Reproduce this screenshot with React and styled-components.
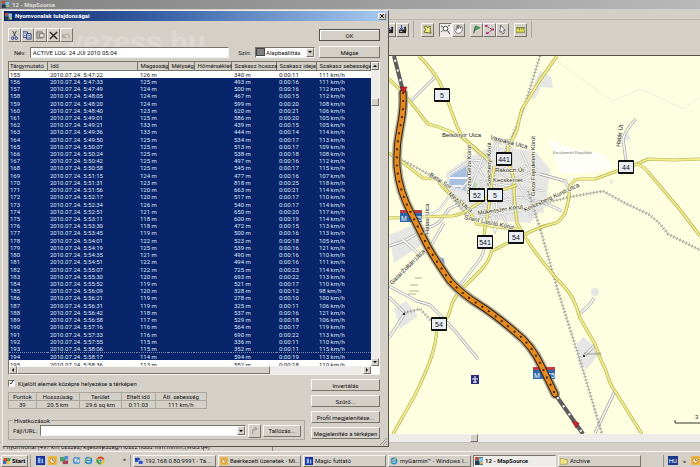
import React from "react";
import styled, { createGlobalStyle, css } from "styled-components";

const face = "#d4d0c8";
const navy = "#08246b";

const GlobalStyle = createGlobalStyle`
  * { box-sizing: border-box; }
  body { margin: 0; background: ${face}; overflow: hidden; }
  body, button, input, select, table {
    font-family: Roboto, "Liberation Sans", Arial, sans-serif;
    font-size: 6px;
    line-height: 7px;
    color: #111;
  }
`;

const raised = css`
  border: 1px solid;
  border-color: #f8f7f4 #77746c #77746c #f8f7f4;
`;
const sunken = css`
  border: 1px solid;
  border-color: #77746c #f4f2ee #f4f2ee #77746c;
`;

const Desktop = styled.div`
  position: relative;
  display: flex;
  flex-direction: column;
  height: 100vh;
  background: ${face};
`;
const MainTitle = styled.header`
  display: flex;
  align-items: center;
  gap: 3px;
  height: 9px;
  flex: none;
  padding-left: 2px;
  background: linear-gradient(90deg, #828282, #9b9b9b 50%, #b9b9b9);
  color: #dedcd6;
  font-weight: bold;
`;
const MenuStrip = styled.div`
  height: 11px;
  flex: none;
  border-bottom: 1px solid #bab6ae;
`;
const ToolStrip = styled.div`
  display: flex;
  flex: none;
  height: 35px;
  padding: 1px 0 17px calc(55vw - 2px);
`;
const ToolGroup = styled.div`
  display: flex;
  align-items: center;
  gap: ${(p) => p.$gap || 0}px;
  padding: 0 4px 0 ${(p) => p.$start || 0}px;
  border-right: 1px solid #aaa69e;
`;
const IconButton = styled.button`
  ${(p) => (p.$pressed ? sunken : raised)}
  display: grid;
  place-items: center;
  width: 13px;
  height: 14px;
  padding: 0;
  background: ${(p) => (p.$pressed ? "#eeece8" : face)};
  margin-left: ${(p) => (p.$apart ? 5 : 0)}px;
  svg { width: 9px; height: 9px; }
`;
const Workspace = styled.main`
  display: grid;
  grid-template-columns: calc(55vw + 4px) 1fr;
  flex: 1;
  min-height: 0;
`;
const SidePane = styled.div`
  border-right: 1px solid #77746c;
`;
const MapPane = styled.section`
  display: flex;
  flex-direction: column;
  min-width: 0;
  border-top: 1px solid #55524c;
`;
const MapArt = styled.svg`
  flex: 1;
  min-height: 0;
  width: 100%;
  background: #fefee1;
`;
const MapScroll = styled.div`
  height: 9px;
  flex: none;
  padding-left: 26%;
  background: #eeece8;
`;
const Thumb = styled.div`
  ${raised}
  width: ${(p) => p.$w || "8px"};
  height: 8px;
  background: ${face};
`;
const StatusBar = styled.footer`
  display: flex;
  flex: none;
  height: 9px;
  overflow: hidden;
  border-top: 1px solid #c4c0b8;
  white-space: nowrap;
`;
const StatusCell = styled.span`
  width: ${(p) => p.$w}px;
  padding: 1px 2px;
  border-right: 1px solid #8a877f;
  line-height: 6px;
`;

/* Taskbar */
const Taskbar = styled.nav`
  display: flex;
  align-items: center;
  gap: 2px;
  height: 16px;
  flex: none;
  padding: 2px 0 0 1px;
  border-top: 1px solid #f6f4f0;
`;
const StartButton = styled.button`
  ${raised}
  display: flex;
  align-items: center;
  gap: 1px;
  width: 27px;
  height: 12px;
  padding: 0 1px;
  background: ${face};
  font-weight: bold;
  color: #000;
`;
const QuickLaunch = styled.div`
  display: flex;
  align-items: center;
  gap: 3px;
  width: 101px;
  height: 12px;
  padding-left: 5px;
  border-left: 1px solid #9a968e;
  border-right: 1px solid #9a968e;
  svg { width: 9px; height: 9px; }
`;
const More = styled.span`
  margin-left: auto;
  padding-right: 4px;
  align-self: flex-start;
  font-weight: bold;
`;
const Tasks = styled.div`
  display: flex;
  flex: 1;
  gap: 2px;
  min-width: 0;
`;
const TaskButton = styled.button`
  ${(p) => (p.$active ? sunken : raised)}
  display: flex;
  align-items: center;
  gap: 2px;
  flex: 0 1 83px;
  min-width: 0;
  height: 12px;
  padding: 0 1px;
  background: ${(p) => (p.$active ? "#efede9" : face)};
  font-weight: ${(p) => (p.$active ? "bold" : "normal")};
  white-space: nowrap;
  svg { width: 8px; height: 8px; flex: none; }
`;
const Tray = styled.div`
  display: flex;
  align-items: center;
  gap: 5px;
  height: 12px;
  padding-left: 4px;
  border-left: 1px solid #9a968e;
`;
const Lang = styled.span`
  padding: 1px;
  background: #1c3a8c;
  color: #fff;
`;

/* Track dialog */
const Dialog = styled.section`
  position: absolute;
  left: 2px;
  top: 10px;
  width: calc(55vw + 2px);
  ${raised}
  border-color: #f0eee8 #55524c #55524c #f0eee8;
  background: ${face};
`;
const Watermark = styled.div`
  position: absolute;
  left: 64px;
  top: 17px;
  font-family: "Liberation Sans", Arial, sans-serif;
  font-size: 29px;
  line-height: 29px;
  font-weight: bold;
  color: #dcd8d1;
  pointer-events: none;
`;
const DialogTitle = styled.header`
  display: flex;
  align-items: center;
  justify-content: space-between;
  height: 10px;
  margin: 0 1px;
  padding: 0 1px;
  background: linear-gradient(90deg, #0a246a, #3f68ab 45%, #a6caf0);
`;
const TitleText = styled.h1`
  display: flex;
  align-items: center;
  gap: 3px;
  margin: 0;
  font-size: 6px;
  line-height: 8px;
  color: #fff;
`;
const Close = styled.button`
  ${raised}
  display: grid;
  place-items: center;
  width: 8px;
  height: 7px;
  padding: 0;
  background: ${face};
`;
const Body = styled.div`
  position: relative;
  display: flex;
  flex-direction: column;
  padding: 7px 8px 6px 5px;
`;
const Top = styled.div`
  display: grid;
  grid-template-columns: 1fr 61px;
  gap: 4px;
  align-items: center;
`;
const Icons = styled.div`
  display: flex;
`;
const Fields = styled.div`
  display: flex;
  align-items: center;
  height: 12px;
`;
const Label = styled.label`
  padding: 0 ${(p) => p.$after || 3}px 0 ${(p) => p.$before || 0}px;
  white-space: nowrap;
`;
const TextBox = styled.input`
  ${sunken}
  flex: 1;
  min-width: 0;
  height: 11px;
  padding: 0 2px;
  background: #fff;
`;
const Combo = styled.div`
  ${sunken}
  display: flex;
  align-items: center;
  flex: ${(p) => (p.$w ? `0 0 ${p.$w}px` : "1")};
  height: 11px;
  background: #fff;
`;
const Swatch = styled.span`
  width: 9px;
  height: 8px;
  border: 1px solid #444;
  background: #808080;
`;
const Select = styled.select`
  appearance: none;
  flex: 1;
  min-width: 0;
  height: 9px;
  padding: 0 1px;
  border: 0;
  background: transparent;
`;
const DropMark = styled.span`
  ${raised}
  display: grid;
  place-items: center;
  width: 8px;
  height: 9px;
  background: ${face};
`;
const Push = styled.button`
  ${raised}
  ${(p) => p.$main && "border-color: #55524c; box-shadow: inset 1px 1px #fff;"}
  width: ${(p) => (p.$w ? `${p.$w}px` : "100%")};
  height: ${(p) => p.$h || 12}px;
  padding: 0;
  background: ${face};
  white-space: nowrap;
`;
const ListFrame = styled.div`
  ${sunken}
  display: grid;
  grid-template-columns: 1fr 8px;
  grid-template-rows: 304px 8px;
  margin-top: 3px;
  background: #fff;
`;
const Clip = styled.div`
  overflow: hidden;
`;
const TrackTable = styled.table`
  width: 100%;
  height: 306px;
  border-collapse: collapse;
  table-layout: fixed;
  th, td {
    padding: 0 0 0 3px;
    text-align: left;
    font-weight: normal;
    white-space: nowrap;
    line-height: 7px;
  }
  th {
    height: 8px;
    border-right: 1px solid #77746c;
    border-bottom: 1px solid #77746c;
    background: ${face};
  }
  td:first-child, th:first-child { padding-left: 1px; }
`;
const TrackRow = styled.tr`
  background: ${(p) => (p.$selected ? navy : "#fff")};
  color: ${(p) => (p.$selected ? "#dfe6f5" : "#222")};
  td { color: inherit; border-top: ${(p) => (p.$focus ? "1px dotted #7d89ac" : "0")}; }
`;
const VScroll = styled.div`
  display: flex;
  flex-direction: column;
  background: #eeece8;
`;
const HScroll = styled.div`
  display: flex;
  background: #eeece8;
`;
const Arrow = styled.button`
  ${raised}
  display: grid;
  place-items: center;
  width: 8px;
  height: 8px;
  padding: 0;
  background: ${face};
`;
const Spacer = styled.div`
  flex: ${(p) => (p.$h ? `0 0 ${p.$h}px` : "1")};
`;
const Bottom = styled.div`
  display: grid;
  grid-template-columns: 1fr 69px;
  gap: 6px;
  margin-top: 4px;
`;
const Actions = styled.div`
  display: flex;
  flex-direction: column;
  gap: 4px;
`;
const CheckLine = styled.label`
  display: flex;
  align-items: center;
  gap: 3px;
  height: 8px;
`;
const Check = styled.input`
  ${sunken}
  appearance: none;
  width: 7px;
  height: 7px;
  margin: 0;
  background: #fff;
  &:checked::after {
    content: "✓";
    display: block;
    font: bold 7px/5px "DejaVu Sans", sans-serif;
    color: #000;
  }
`;
const Stats = styled.table`
  width: 67%;
  margin-top: 5px;
  border-collapse: collapse;
  th, td {
    height: 8px;
    padding: 0;
    border: 1px solid #aaa69e;
    font-weight: normal;
    text-align: center;
    line-height: 7px;
  }
`;
const Links = styled.fieldset`
  display: flex;
  align-items: center;
  gap: 2px;
  margin: 8px 0 0;
  padding: 0 3px 2px 4px;
  min-width: 0;
  height: 23px;
  border: 1px solid #aaa69e;
  legend { padding: 0 1px; }
`;
const Grip = styled.svg`
  position: absolute;
  right: 1px;
  bottom: 1px;
  width: 7px;
  height: 7px;
`;

const RAW = `155 47:22 126 340 11 111|156 47:33 125 493 16 111|157 47:49 124 500 16 112|158 48:05 124 467 15 112|159 48:20 124 599 20 108|160 48:40 123 620 21 106|161 49:01 125 586 20 105|162 49:21 133 439 15 105|163 49:36 133 444 14 114|164 49:50 125 534 17 113|165 50:07 125 513 17 109|166 50:24 125 538 18 108|167 50:42 125 497 16 112|168 50:58 125 545 17 115|169 51:15 124 477 16 107|170 51:31 123 818 25 118|171 51:56 120 663 21 114|172 52:17 120 517 17 110|173 52:34 126 540 17 114|174 52:51 121 650 20 117|175 53:11 118 600 19 114|176 53:30 118 472 15 113|177 53:45 119 500 16 113|178 54:01 122 523 18 105|179 54:19 125 539 16 121|180 54:35 121 490 16 110|181 54:51 122 494 16 111|182 55:07 122 725 23 114|183 55:30 120 693 22 113|184 55:52 119 521 17 110|185 56:09 120 328 12 98|186 56:21 119 278 10 100|187 56:31 119 325 11 106|188 56:42 118 537 16 121|189 56:58 117 529 18 106|190 57:16 116 564 17 119|191 57:33 116 690 22 113|192 57:55 115 336 11 110|193 58:06 115 352 11 115|194 58:17 114 594 19 113|195 58:36 113 552 18 110`;
const rows = RAW.split("|").map((r) => r.split(" "));
const columns = [
  ["Tárgymutató", 38], ["Idő", 90], ["Magasság", 31], ["Mélység", 26],
  ["Hőmérséklet", 37], ["Szakasz hossza", 45], ["Szakasz ideje", 40], ["Szakasz sebessége"],
];

const Tri = ({ d }) => {
  const paths = { up: "M0 3L2 1L4 3Z", down: "M0 1L2 3L4 1Z", left: "M3 0L1 2L3 4Z", right: "M1 0L3 2L1 4Z" };
  return <svg width="4" height="4" aria-hidden="true"><path d={paths[d]} fill="#000" /></svg>;
};
const AppIcon = () => (
  <svg width="7" height="7" viewBox="0 0 8 8" aria-hidden="true">
    <rect width="8" height="8" fill="#4a7c86" /><rect width="4" height="3" fill="#c44a34" />
    <rect x="4" y="1" width="4" height="4" fill="#7fc0e0" /><rect y="4" width="4" height="4" fill="#243c50" />
    <rect x="5" y="5" width="3" height="2" fill="#e0b060" />
  </svg>
);
const glyphs = {
  cut: <><path d="M3 0L6 6M7 0L4 6" stroke="#333" fill="none" /><circle cx="3" cy="8" r="1.4" stroke="#22339a" fill="none" /><circle cx="7" cy="8" r="1.4" stroke="#22339a" fill="none" /></>,
  copy: <><path d="M0 1H5V7H0Z" fill="#eef" stroke="#22306f" /><path d="M4 3H9V9H4Z" fill="#dfe3f4" stroke="#22306f" /><path d="M5 5H8M5 7H8M1 3H3M1 5H3" stroke="#22306f" strokeWidth=".7" /></>,
  paste: <><path d="M1 1H7V8H1Z" fill="#bbb7af" stroke="#77746c" /><path d="M4 3H9V7H4Z" fill="#e8e6e2" stroke="#77746c" /></>,
  del: <path d="M1 1L9 9M9 1L1 9" stroke="#222" strokeWidth="1.5" />,
  undo: <path d="M1 3V7H5M1 7C3 2 9 2 8 8" stroke="#9a968e" fill="none" />,
  device: <><path d="M1 5H9V9H1Z" fill="#222" /><path d="M8 2V6" stroke="#222" strokeWidth="2" /><path d="M4 0V4M2 3L4 5L6 3" stroke="#2234b4" fill="none" /><path d="M2 7H5" stroke="#ddd" /></>,
  area: <path d="M1 2L4 1L5 3L8 1V6L9 9L1 8L3 5Z" fill="#eeee86" stroke="#62621e" />,
  zoom: <><circle cx="5" cy="4" r="2.6" fill="#fff" stroke="#333" /><path d="M7 6L10 10M0 1L2 2M8 1L10 0M0 8L2 6" stroke="#333" /></>,
  hand: <path d="M3 9L0 5L1 4L3 6V1L4 1V4V0H5V4L6 1H7V4L8 2H9V6L7 9Z" fill="#fff" stroke="#555" strokeWidth=".7" />,
  flag: <><path d="M2 9L4 1" stroke="#222" /><path d="M4 1L9 3L3 6Z" fill="#49aa60" stroke="#156c2a" strokeWidth=".6" /></>,
  route: <><path d="M1 1L8 5L3 9" stroke="#444" fill="none" strokeDasharray="1.5 1" /><path d="M0 0H3V2H0ZM7 4H10V6H7ZM1 8H4V10H1Z" fill="#c02c8e" /></>,
  pointer: <path d="M3 0L8 6H6L7 9L5 10L4 7L2 8Z" fill="#fff" stroke="#444" strokeWidth=".8" />,
  ruler: <><path d="M0 3H10V8H0Z" fill="#eaea58" stroke="#77772a" /><path d="M2 3V5M4 3V6M6 3V5M8 3V6" stroke="#444" strokeWidth=".7" /></>,
  jump: <path d="M3 9V5Q3 3 6 3M5 1L8 3L5 5" fill="none" stroke="#8a877f" />,
  blue: <><rect width="10" height="10" fill="#1d2f9c" /><path d="M2 2H5V8H2ZM6 3H8V8H6Z" fill="#83b6ec" /></>,
  mail: <><rect width="10" height="10" rx="1" fill="#f0b642" /><circle cx="5" cy="5" r="3" fill="#fff3c4" stroke="#bd7820" /><path d="M5 3V5H7" stroke="#765" fill="none" /></>,
  disks: <><rect x="0" y="1" width="6" height="5" fill="#49a36b" /><rect x="3" y="5" width="6" height="4" fill="#a54458" /><path d="M5 0H9V4H5Z" fill="#568bd0" /></>,
  desk: <><rect x="1" y="1" width="8" height="8" rx="3" fill="#5594cc" /><path d="M3 3H8V7H3Z" fill="#eef6fb" /><path d="M4 7L8 2" stroke="#275a96" /></>,
  ie: <><circle cx="5" cy="5" r="3.4" fill="none" stroke="#1f8fd6" strokeWidth="1.7" /><path d="M2 5H8" stroke="#1f8fd6" strokeWidth="1.4" /><path d="M0 9Q0 4 9 1" stroke="#ecb72c" fill="none" /></>,
  chrome: <><circle cx="5" cy="5" r="4.5" fill="#e3bf34" /><path d="M1 3A4.5 4.5 0 0 1 9.4 4H5Z" fill="#d8412f" /><path d="M.7 3.4A4.5 4.5 0 0 0 5 9.5L6 6Z" fill="#3b9c48" /><circle cx="5" cy="5" r="1.9" fill="#4a86d8" stroke="#fff" strokeWidth=".6" /></>,
  pc: <><rect x="0" y="1" width="6" height="5" fill="#1d44b8" /><rect x="4" y="4" width="6" height="5" fill="#3158c8" stroke="#fff" strokeWidth=".6" /></>,
  folder: <path d="M0 2H4L5 3H9V9H0Z" fill="#f4e58c" stroke="#9a852c" strokeWidth=".8" />,
};
const Glyph = ({ name }) => <svg viewBox="0 0 10 10" width="9" height="9" aria-hidden="true">{glyphs[name]}</svg>;

const yellowRoads = [
  "M419 55Q434 70 440 82T451 109T462 136L492 162",
  "M389 78Q400 88 408 98T428 123Q445 127 463 137L492 162",
  "M389 152Q400 159 410 167T423 177L437 178Q445 190 456 197T477 223L498 226L518 228",
  "M557 55L540 79Q526 102 522 108Q519 118 518 125T508 145L507 158",
  "M507 160Q514 172 514 185T517 222Q526 238 533 248T557 278Q569 290 573 298T580 317L595 343Q600 358 606 370Q610 384 615 390L642 433",
  "M540 226L556 222Q562 218 565 212Q570 198 569 188Q572 178 580 178L595 178L617 170L637 163L648 158L673 159L700 158",
  "M635 163Q643 164 649 172L681 210L700 235",
  "M545 225Q530 230 518 237L492 250Q489 260 483 267L462 288Q452 298 450 310Q446 322 437 327Q436 343 430 360Q424 376 414 396L393 433",
  "M389 217L452 215Q460 214 468 209L496 191L517 184",
  "M484 236L485 226L488 212L494 165",
];
const whiteRoads = [
  "M434 77L411 100", "M636 118Q626 128 623 138L626 160", "M580 312Q590 305 594 297",
  "M584 355L596 343", "M389 245L404 240L425 228Q437 224 440 220L449 208L465 200",
  "M392 281L412 262L430 246L444 222", "M389 285L417 300L430 304L443 317L455 330L478 358",
  "M389 296L405 312L389 337", "M402 238L420 254", "M460 284Q475 265 480 258T485 236",
  "M540 173L565 180L570 188", "M540 200L562 210", "M615 390L595 432",
];
const streets = [
  "M450 173L470 160L490 159", "M459 190L486 160L496 140", "M464 204L493 174L530 164",
  "M470 145L507 177L536 180", "M464 154L481 172L515 205", "M492 138L511 147L514 215",
  "M494 166L540 173", "M478 180L530 188L545 190", "M465 208L520 196L545 202",
  "M484 203L495 230L500 209L510 229", "M498 138L496 220", "M521 150L535 180L530 218",
  "M455 187L440 208L430 214", "M474 161L485 178L476 197", "M503 160L527 197L543 211",
  "M480 216L529 208L540 200", "M484 153L470 190", "M510 180L538 168",
];
const rails = [
  "M540 55L523 110L505 152", "M540 203L575 195L603 190L625 202L650 214L660 223L668 233L700 249",
  "M528 190L540 227L558 290L583 369L602 433", "M389 153L410 163L437 178L468 216", "M404 312L420 308L437 326",
];
const track = "M403 92Q404 108 400 127T397 166Q399 190 412 214Q420 230 426 242T450 280Q462 293 478 303T515 331Q532 344 542 366L555 393";
const signs = [["5", 442, 94], ["441", 504, 158], ["52", 477, 194], ["5", 495, 194], ["541", 485, 241], ["54", 516, 236], ["44", 626, 166], ["54", 439, 323]];
const names = [
  ["Belsőnyír Utca", 442, 136, 0], ["Vaspálya Utca", 490, 138, 15], ["Rákóczi Út", 495, 171, 0], ["Kecskemét", 493, 181, 0],
  ["Dózsa Géza Körút", 471, 193, -90], ["Széchenyi Körút", 491, 185, -90], ["Géza Fejedelem Körút", 535, 195, -90],
  ["Batai Sor", 429, 175, 32], ["Mező Utca", 448, 194, 38], ["Műkertszer Körút", 478, 214, -8],
  ["Kerkesberg Kunó Utca", 525, 211, -25], ["Szent László Körút", 464, 218, 12], ["Garai Zoltán Utca", 392, 284, -45],
  ["Halasi Utca", 429, 233, -90], ["Határ Út", 620, 146, -82],
];

const AreaMap = () => (
  <MapArt viewBox="389 55 311 378" preserveAspectRatio="xMinYMin slice" role="img" aria-label="Térkép" fontFamily="Liberation Sans">
    <g fill="#e6e6e4">
      <path d="M540 70L551 76L553 87L541 86L535 98L528 96Z" /><path d="M468 157L492 145L535 150L550 168L546 205L530 222L470 217L450 198L446 172Z" />
      <path d="M389 234L418 222L430 238L394 262Z" /><path d="M394 308L406 300L418 315L400 328Z" />
      <path d="M577 343L583 336L595 345L598 354L587 368L579 364Z" /><circle cx="595" cy="291" r="4" />
      <path d="M626 131L631 137L627 140L623 137ZM609 178L614 180L611 184Z" /><path d="M430 68L438 77L433 81Z" />
    </g>
    <path d="M549 138Q575 150 592 151T612 167Q580 175 560 171Z" fill="#fffffa" />
    <path d="M450 175L470 163L466 190L449 185Z" fill="#a8c0e0" /><path d="M449 177H468M452 185H465" stroke="#f2f5fa" strokeWidth="2" />
    <path d="M470 175L478 184L468 196ZM482 156L490 149V159Z" fill="#bcd9b6" />
    <path d="M557 60L612 100L641 88L684 108L700 96" fill="none" stroke="#f1efdc" />
    <path d="M415 277H422M410 284H418M409 290H419M408 293H416" stroke="#b3b08c" />
    {streets.map((d) => <g key={d} fill="none"><path d={d} stroke="#b3b3b5" strokeWidth="2.2" /><path d={d} stroke="#fff" strokeWidth="1.2" /></g>)}
    {whiteRoads.map((d) => <g key={d} fill="none" strokeLinejoin="round"><path d={d} stroke="#a2a2a6" strokeWidth="3" /><path d={d} stroke="#f7f7f2" strokeWidth="1.7" /></g>)}
    {rails.map((d) => <g key={d} fill="none" stroke="#9b9b96"><path d={d} strokeWidth=".7" /><path d={d} strokeWidth="3.4" strokeDasharray=".8 2.6" /></g>)}
    {yellowRoads.map((d) => <g key={d} fill="none" strokeLinejoin="round"><path d={d} stroke="#b7b14c" strokeWidth="3.2" /><path d={d} stroke="#f1ed93" strokeWidth="1.8" /></g>)}
    <path d="M438 255L444 258L445 264L440 263Z" fill="#7c9cc8" />
    <g fill="none">
      <path d={track} stroke="#b3ad96" strokeWidth="10" strokeLinecap="round" />
      <path d="M394 55L403 90M555 393L583 433" stroke="#5d5d5f" strokeWidth="4" />
      <path d="M394 55L403 90M555 393L583 433" stroke="#fff" strokeWidth="2" strokeDasharray="2 8" strokeDashoffset="6" />
    </g>
    {[[411, 215], [544, 372]].map(([x, y]) => (
      <g key={x}><rect x={x - 11} y={y - 6} width="22" height="12" fill="#2d68ad" /><rect x={x - 11} y={y - 6} width="22" height="3" fill="#bc3e42" />
        <text x={x - 10} y={y + 5} fontSize="7" fill="#fff">M</text><text x={x + 3} y={y + 5} fontSize="7" fill="#fff">75</text></g>
    ))}
    <g fill="none" strokeLinecap="round"><path d={track} stroke="#2a2118" strokeWidth="7" /><path d={track} stroke="#e58a1e" strokeWidth="5" /><path d={track} stroke="#2e1b08" strokeWidth="2" strokeDasharray=".1 8" /></g>
    <path d="M400 86H407L404 92ZM572 420L579 422L576 427Z" fill="#d0212c" stroke="#7b1820" strokeWidth=".6" />
    <g fill="#222" stroke="#fefee8" strokeWidth="1" paintOrder="stroke">
      {names.map(([t, x, y, r]) => <text key={t} x={x} y={y} fontSize={6} transform={`rotate(${r} ${x} ${y})`}>{t}</text>)}
    </g>
    <text x="553" y="153" fontSize="4" fill="#77776f">Kecskeméti Repülőtér</text>
    <text x="584" y="354" fontSize="4" fill="#88887f">Városföld</text>
    {signs.map(([t, x, y]) => (
      <g key={`${t}${x}`}><rect x={x - 8} y={y - 7} width="16" height="14" rx="1" fill="#111" /><rect x={x - 7} y={y - 5} width="14" height="10" fill="#e9eef5" />
        <text x={x} y={y + 3} fontSize="7" textAnchor="middle" fill="#111">{t}</text></g>
    ))}
    <rect x="471" y="374" width="8" height="9" fill="#2b2b80" /><path d="M475 375V382M472 378H478M473 381H477" stroke="#fff" />
    <circle cx="404" cy="313" r="1" /><circle cx="584" cy="355" r="1" />
    <path d="M675 419V422H700" fill="none" stroke="#333" /><text x="695" y="418" fontSize="6" fill="#333">3</text>
  </MapArt>
);

export default function App() {
  return (
    <Desktop>
      <GlobalStyle />
      <MainTitle><AppIcon />12 - MapSource</MainTitle>
      <MenuStrip />
      <ToolStrip>
        <ToolGroup><IconButton aria-label="Vétel"><Glyph name="device" /></IconButton><IconButton aria-label="Küldés"><Glyph name="device" /></IconButton></ToolGroup>
        <ToolGroup $start={7}>
          <IconButton aria-label="Terület"><Glyph name="area" /></IconButton>
          <IconButton $pressed $apart aria-label="Nagyítás"><Glyph name="zoom" /></IconButton>
          <IconButton aria-label="Mozgatás"><Glyph name="hand" /></IconButton>
          <IconButton $apart aria-label="Útpont"><Glyph name="flag" /></IconButton>
          <IconButton aria-label="Útvonal"><Glyph name="route" /></IconButton>
          <IconButton aria-label="Kijelölés"><Glyph name="pointer" /></IconButton>
          <IconButton $apart aria-label="Mérés"><Glyph name="ruler" /></IconButton>
        </ToolGroup>
      </ToolStrip>
      <Workspace>
        <SidePane />
        <MapPane>
          <AreaMap />
          <MapScroll><Thumb /></MapScroll>
        </MapPane>
      </Workspace>
      <StatusBar>
        <StatusCell $w={103}>1 nyomvonal (497 km összes) kijelölve</StatusCell>
        <StatusCell $w={101}>Szeg/Hossz hddd°mm.mmm',(WGS 84)</StatusCell>
        <StatusCell $w={69} />
      </StatusBar>
      <Taskbar>
        <StartButton>
          <svg width="8" height="8" viewBox="0 0 8 8" aria-hidden="true"><path d="M1 1H4V4H0Z" fill="#d8412f" /><path d="M4 1H8L7 4H4Z" fill="#49a34e" /><path d="M0 4H4L3 7H0Z" fill="#3b6cd0" /><path d="M4 4H7L6 7H3Z" fill="#eec23a" /></svg>
          Start
        </StartButton>
        <QuickLaunch>
          {["blue", "mail", "disks", "desk", "ie", "chrome"].map((n) => <Glyph key={n} name={n} />)}
          <More>»</More>
        </QuickLaunch>
        <Tasks>
          <TaskButton><Glyph name="pc" />192.168.0.80:9991 - Tá...</TaskButton>
          <TaskButton><Glyph name="mail" />Beérkezett üzenetek - Mi...</TaskButton>
          <TaskButton><Glyph name="blue" />Magic futtató</TaskButton>
          <TaskButton><Glyph name="ie" />myGarmin™ - Windows I...</TaskButton>
          <TaskButton $active><AppIcon />12 - MapSource</TaskButton>
          <TaskButton><Glyph name="folder" />Archive</TaskButton>
        </Tasks>
        <Tray><Lang>HU</Lang><b>«</b><Glyph name="mail" /></Tray>
      </Taskbar>

      <Dialog aria-label="Nyomvonalak tulajdonságai">
        <DialogTitle>
          <TitleText><AppIcon />Nyomvonalak tulajdonságai</TitleText>
          <Close aria-label="Bezárás"><svg width="4" height="4" viewBox="0 0 4 4"><path d="M0 0L4 4M4 0L0 4" stroke="#000" /></svg></Close>
        </DialogTitle>
        <Watermark>vezess.hu</Watermark>
        <Body>
          <Top>
            <Icons>
              {[["cut", "Kivágás"], ["copy", "Másolás"], ["paste", "Beillesztés"], ["del", "Törlés"], ["undo", "Visszavonás"]].map(([n, l]) => (
                <IconButton key={n} aria-label={l}><Glyph name={n} /></IconButton>
              ))}
            </Icons>
            <Push $main>OK</Push>
            <Fields>
              <Label htmlFor="name" $before={6} $after={4}>Név:</Label>
              <TextBox id="name" defaultValue="ACTIVE LOG: 24 JÚl 2010 05:04" />
              <Label htmlFor="color" $before={9} $after={4}>Szín:</Label>
              <Combo $w={60}><Swatch /><Select id="color"><option>Alapbeállítás</option></Select><DropMark><Tri d="down" /></DropMark></Combo>
            </Fields>
            <Push>Mégse</Push>
          </Top>
          <ListFrame>
            <Clip>
              <TrackTable>
                <colgroup>{columns.map(([t, w]) => <col key={t} width={w} />)}</colgroup>
                <thead><tr>{columns.map(([t]) => <th key={t}>{t}</th>)}</tr></thead>
                <tbody>
                  {rows.map(([n, time, alt, len, dur, speed]) => (
                    <TrackRow key={n} $selected={n !== "155" && n !== "195"} $focus={n === "194"}>
                      <td>{n}</td><td>2010.07.24. 5:{time}</td><td>{alt} m</td><td /><td />
                      <td>{len} m</td><td>0:00:{dur}</td><td>{speed} km/h</td>
                    </TrackRow>
                  ))}
                </tbody>
              </TrackTable>
            </Clip>
            <VScroll>
              <Arrow aria-label="Fel"><Tri d="up" /></Arrow><Spacer $h={28} /><Thumb /><Spacer /><Arrow aria-label="Le"><Tri d="down" /></Arrow>
            </VScroll>
            <HScroll>
              <Arrow aria-label="Balra"><Tri d="left" /></Arrow><Thumb $w="70%" /><Spacer /><Arrow aria-label="Jobbra"><Tri d="right" /></Arrow>
            </HScroll>
          </ListFrame>
          <Bottom>
            <div>
              <CheckLine><Check type="checkbox" defaultChecked />Kijelölt elemek középre helyezése a térképen</CheckLine>
              <Stats>
                <thead><tr><th>Pontok</th><th>Hosszúság</th><th>Terület</th><th>Eltelt idő</th><th>Átl. sebesség</th></tr></thead>
                <tbody><tr><td>39</td><td>20.5 km</td><td>29.6 sq km</td><td>0:11:03</td><td>111 km/h</td></tr></tbody>
              </Stats>
              <Links>
                <legend>Hivatkozások</legend>
                <Label htmlFor="url" $after={1}>Fájl/URL:</Label>
                <Combo><Select id="url" /><DropMark><Tri d="down" /></DropMark></Combo>
                <IconButton aria-label="Megnyitás"><Glyph name="jump" /></IconButton>
                <Push $w={38}>Tallózás...</Push>
              </Links>
            </div>
            <Actions>
              <Push>Invertálás</Push>
              <Push>Szűrő...</Push>
              <Push>Profil megjelenítése...</Push>
              <Push>Megjelenítés a térképen</Push>
            </Actions>
          </Bottom>
        </Body>
        <Grip viewBox="0 0 7 7" aria-hidden="true"><path d="M0 7L7 0M3 7L7 3M6 7L7 6" stroke="#9a968e" /></Grip>
      </Dialog>
    </Desktop>
  );
}
